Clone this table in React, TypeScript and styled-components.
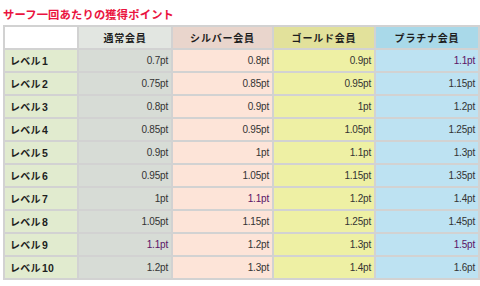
import React from 'react';
import styled, { createGlobalStyle } from 'styled-components';

const GlobalStyle = createGlobalStyle`
  html, body {
    margin: 0;
    padding: 0;
    background: #ffffff;
  }
`;

type Tier = 'normal' | 'silver' | 'gold' | 'platinum';

const tierColors: Record<Tier, { head: string; body: string }> = {
  normal: { head: '#e2e6e1', body: '#d7dcd6' },
  silver: { head: '#e9d5cc', body: '#fde4d8' },
  gold: { head: '#e2e19b', body: '#eef0a4' },
  platinum: { head: '#a9d9e9', body: '#bde2f2' },
};

const tiers: { key: Tier; label: string; width: number }[] = [
  { key: 'normal', label: '通常会員', width: 92 },
  { key: 'silver', label: 'シルバー会員', width: 99 },
  { key: 'gold', label: 'ゴールド会員', width: 100 },
  { key: 'platinum', label: 'プラチナ会員', width: 102 },
];

// [normal, silver, gold, platinum]
const points: string[][] = [
  ['0.7', '0.8', '0.9', '1.1'],
  ['0.75', '0.85', '0.95', '1.15'],
  ['0.8', '0.9', '1', '1.2'],
  ['0.85', '0.95', '1.05', '1.25'],
  ['0.9', '1', '1.1', '1.3'],
  ['0.95', '1.05', '1.15', '1.35'],
  ['1', '1.1', '1.2', '1.4'],
  ['1.05', '1.15', '1.25', '1.45'],
  ['1.1', '1.2', '1.3', '1.5'],
  ['1.2', '1.3', '1.4', '1.6'],
];

const Page = styled.div`
  padding: 4px 2px 0 3px;
  width: 476px;
`;

const Title = styled.h2`
  margin: 0;
  height: 21px;
  line-height: 21px;
  font-family: 'Noto Sans CJK JP', sans-serif;
  font-size: 11.3px;
  font-weight: 700;
  color: #ea1440;
  letter-spacing: 0.15px;
`;

const Table = styled.table`
  width: 476px;
  table-layout: fixed;
  border-collapse: separate;
  border-spacing: 2px;
  background: #d2d2d2;
`;

const Corner = styled.th`
  background: #ffffff;
  height: 21px;
  padding: 0;
`;

const HeadCell = styled.th<{ $tier: Tier }>`
  background: ${(p) => tierColors[p.$tier].head};
  height: 21px;
  padding: 0;
  text-align: center;
  font-family: 'Noto Sans CJK JP', sans-serif;
  font-size: 10px;
  font-weight: 700;
  letter-spacing: 0.8px;
  color: #1e1e1e;
`;

const LevelCell = styled.th`
  background: #e1ebcf;
  height: 21px;
  padding: 0 0 0 5px;
  text-align: left;
  font-family: 'Noto Sans CJK JP', sans-serif;
  font-size: 10px;
  font-weight: 700;
  letter-spacing: 0.3px;
  color: #1e1e1e;
  white-space: nowrap;
`;

const Num = styled.span`
  font-family: 'Liberation Sans', Arial, sans-serif;
  font-size: 10.5px;
  font-weight: 700;
  margin-left: 1px;
`;

const PointCell = styled.td<{ $tier: Tier; $visited?: boolean }>`
  background: ${(p) => tierColors[p.$tier].body};
  height: 21px;
  padding: 0 3px 0 0;
  text-align: right;
  font-family: 'Liberation Sans', Arial, sans-serif;
  font-size: 10px;
  letter-spacing: -0.2px;
  color: ${(p) => (p.$visited ? '#5a1466' : '#333333')};
`;

const visitedValues = ['1.1', '1.5'];

export default function App() {
  return (
    <>
      <GlobalStyle />
      <Page>
        <Title>サーフ一回あたりの獲得ポイント</Title>
        <Table>
          <colgroup>
            <col style={{ width: 72 }} />
            {tiers.map((t) => (
              <col key={t.key} style={{ width: t.width }} />
            ))}
          </colgroup>
          <thead>
            <tr>
              <Corner />
              {tiers.map((t) => (
                <HeadCell key={t.key} $tier={t.key}>
                  {t.label}
                </HeadCell>
              ))}
            </tr>
          </thead>
          <tbody>
            {points.map((row, i) => (
              <tr key={i}>
                <LevelCell>
                  レベル<Num>{i + 1}</Num>
                </LevelCell>
                {row.map((v, j) => (
                  <PointCell
                    key={j}
                    $tier={tiers[j].key}
                    $visited={visitedValues.includes(v) && j !== 2}
                  >
                    {v}pt
                  </PointCell>
                ))}
              </tr>
            ))}
          </tbody>
        </Table>
      </Page>
    </>
  );
}
